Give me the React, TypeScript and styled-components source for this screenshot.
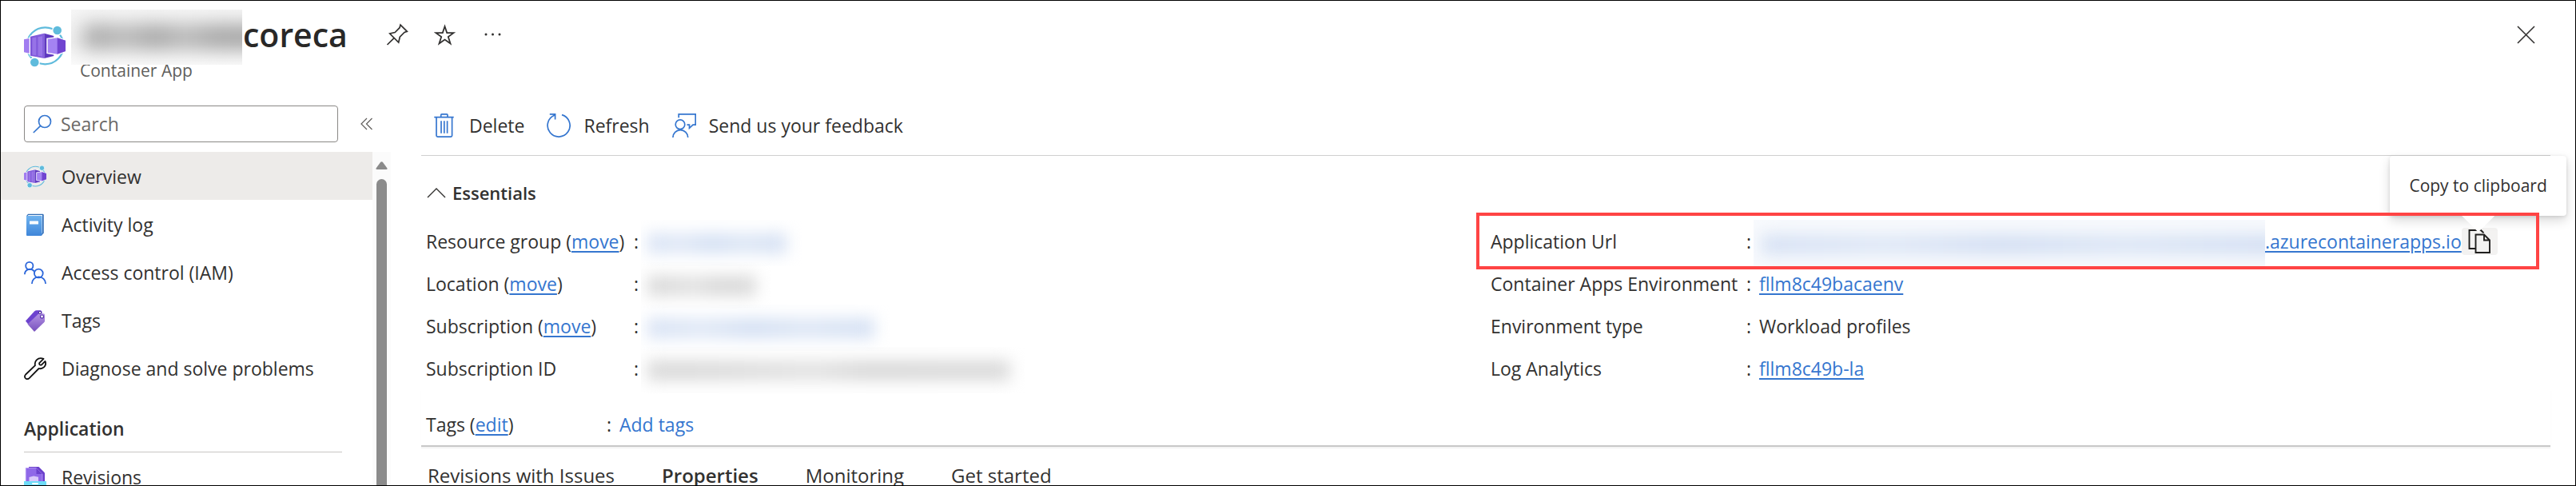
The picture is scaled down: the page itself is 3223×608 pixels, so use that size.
import React from "react";
import styled, { createGlobalStyle, css } from "styled-components";

const ink = "#323130";
const link = "#3576cf";

const GlobalStyle = createGlobalStyle`
  *, *::before, *::after { box-sizing: border-box; }
  body {
    margin: 0;
    background: #fff;
    color: ${ink};
    font-family: "Open Sans", "Noto Sans", sans-serif;
    font-size: 23px;
    line-height: 32px;
  }
  h1, h2, p, ul, dl, dd, dt { margin: 0; padding: 0; }
  ul { list-style: none; }
  svg { display: block; flex: none; }
`;

const buttonReset = css`
  border: 0;
  padding: 0;
  background: none;
  color: inherit;
  font: inherit;
  cursor: pointer;
`;

const Frame = styled.div`
  display: flex;
  flex-direction: column;
  height: 100vh;
  overflow: hidden;
  border: 1px solid #000;
`;

/* ---------- blade header ---------- */

const Header = styled.header`
  display: flex;
  align-items: flex-start;
  flex: none;
  gap: 7px;
  padding: 11px 50px 30px 29px;
`;

const LogoSlot = styled.div`
  padding-top: 20px;
`;

const Heading = styled.div`
  flex: 1;
`;

const TitleRow = styled.div`
  display: flex;
  align-items: flex-start;
  height: 62px;
`;

const Title = styled.h1`
  display: flex;
  align-items: flex-start;
  font-size: 41px;
  font-weight: 600;
  line-height: 62px;
  color: #292827;
`;

const TitleMask = styled.span`
  position: relative;
  z-index: 1;
  width: 214px;
  height: 69px;
  margin-right: 1px;
  overflow: hidden;
  background: linear-gradient(#f6f6f6, #f0f0f0 60%, #fafafa);

  &::before {
    content: "";
    position: absolute;
    inset: 19px -30px 20px 16px;
    background: linear-gradient(90deg, #a0a0a0, #b8b8b8 22%, #a2a2a2 40%, #b8b8b8 55%, #a4a4a4 72%, #a2a2a2);
    filter: blur(12px);
  }
`;

const Subtitle = styled.p`
  padding-left: 11px;
  font-size: 21px;
  line-height: 28px;
  color: #605e5c;
`;

const TitleActions = styled.div`
  display: flex;
  gap: 32px;
  margin-left: 48px;
`;

const IconButton = styled.button`
  ${buttonReset}
  display: flex;
  align-items: center;
  height: 62px;
`;

/* ---------- side menu ---------- */

const Body = styled.div`
  display: flex;
  flex: 1;
  min-height: 0;
`;

const Sidebar = styled.aside`
  display: flex;
  flex-direction: column;
  flex: none;
  width: 488px;
  gap: 12px;
`;

const SearchRow = styled.div`
  display: flex;
  align-items: center;
  gap: 28px;
  padding-left: 29px;
`;

const SearchBox = styled.label`
  display: flex;
  align-items: center;
  gap: 11px;
  width: 393px;
  height: 46px;
  padding: 0 10px;
  border: 1px solid #8a8886;
  border-radius: 4px;
`;

const SearchInput = styled.input`
  flex: 1;
  min-width: 0;
  height: 32px;
  padding: 0;
  border: 0;
  outline: 0;
  background: none;
  color: ${ink};
  font: inherit;
  &::placeholder { color: #6b6967; opacity: 1; }
`;

const CollapseButton = styled.button`
  ${buttonReset}
`;

const MenuArea = styled.div`
  display: flex;
  flex: 1;
  min-height: 0;
`;

const Menu = styled.nav`
  flex: 1;
  overflow: hidden;
`;

const MenuLink = styled.a<{ $active?: boolean }>`
  display: flex;
  align-items: center;
  gap: 19px;
  height: 60px;
  padding: 2px 0 0 29px;
  background: ${(p) => (p.$active ? "#edebe9" : "transparent")};
  color: inherit;
  text-decoration: none;
`;

const MenuSection = styled.h2`
  margin: 30px 38px 0 29px;
  padding-bottom: 13px;
  border-bottom: 1px solid #c8c6c4;
  font-size: 23px;
  font-weight: 600;
`;

const ScrollTrack = styled.div`
  display: flex;
  flex-direction: column;
  align-items: center;
  flex: none;
  width: 23px;
  padding-top: 12px;
  gap: 12px;
  background: #fbfbfb;
`;

const ScrollThumb = styled.div`
  flex: 1;
  width: 13px;
  border-radius: 7px 7px 0 0;
  background: #8b8b8b;
`;

/* ---------- main ---------- */

const Main = styled.main`
  flex: 1;
  min-width: 0;
  padding: 0 31px 0 38px;
`;

const Toolbar = styled.div`
  display: flex;
  align-items: center;
  gap: 28px;
  padding: 0 0 12px 14px;
  border-bottom: 1px solid #d0d0d0;
`;

const Command = styled.button`
  ${buttonReset}
  display: flex;
  align-items: center;
  gap: 16px;
  height: 50px;
`;

const EssentialsToggle = styled.button`
  ${buttonReset}
  display: flex;
  align-items: center;
  gap: 8px;
  margin: 30px 0 18px 7px;
  font-size: 22px;
  font-weight: 600;
  line-height: 32px;
`;

const Columns = styled.div`
  display: grid;
  grid-template-columns: 1fr 1fr;
`;

const Field = styled.dl<{ $label: number; $marked?: boolean }>`
  position: relative;
  display: grid;
  grid-template-columns: ${(p) => p.$label}px 1fr;
  align-items: center;
  height: 53px;
  padding-left: 6px;
  white-space: nowrap;

  ${(p) =>
    p.$marked &&
    css`
      &::after {
        content: "";
        position: absolute;
        z-index: 3;
        inset: -9px 14px -9px -12px;
        border: 4px solid #ff4444;
        pointer-events: none;
      }
    `}
`;

const Value = styled.dd`
  display: flex;
  align-items: center;
  &::before {
    content: ":";
    width: 9px;
  }
`;

const ValueText = styled.span`
  padding-left: 7px;
`;

const TextLink = styled.a<{ $plain?: boolean }>`
  color: ${link};
  text-decoration: ${(p) => (p.$plain ? "none" : "underline")};
  text-decoration-thickness: 2px;
  text-underline-offset: 3px;
`;

const Mask = styled.span<{ $width: number; $tone: "blue" | "grey"; $boxed?: boolean }>`
  position: relative;
  flex: none;
  width: ${(p) => p.$width}px;
  height: 58px;
  margin: -2px 0 -7px;
  overflow: hidden;
  background: ${(p) => (p.$boxed ? "#f8fafd" : "none")};

  &::before {
    content: "";
    position: absolute;
    inset: ${(p) => (p.$boxed ? "18px -20px 14px 10px" : "17px 22px 16px 8px")};
    background: ${(p) =>
      p.$tone === "blue"
        ? "linear-gradient(90deg, #d6e1f4, #dfe8f6 24%, #d3dff3 46%, #dce6f5 70%, #d3dff3)"
        : "linear-gradient(90deg, #d8d8d8, #dadada 18%, #e2e2e2 46%, #d8d8d8 60%, #d9d9d9)"};
    filter: blur(10px);
  }
`;

const CopySlot = styled.span`
  position: relative;
`;

const CopyButton = styled.button`
  ${buttonReset}
  display: flex;
  align-items: center;
  justify-content: center;
  width: 45px;
  height: 34px;
  border-radius: 4px;
  background: #f3f2f1;
`;

const Tooltip = styled.span`
  position: absolute;
  z-index: 2;
  right: -86px;
  bottom: 49px;
  padding: 0 24px;
  border-radius: 4px;
  background: #fff;
  box-shadow: 0 6px 14px rgba(0, 0, 0, 0.15), 0 1px 4px rgba(0, 0, 0, 0.12);
  font-size: 21px;
  line-height: 75px;
`;

const TooltipBeak = styled.span`
  position: absolute;
  z-index: 2;
  left: 0;
  bottom: 28px;
  width: 42px;
  height: 21px;
  background: #fff;
  clip-path: polygon(0 0, 100% 0, 50% 100%);
`;

const TagsArea = styled.div`
  padding: 17px 0 0;
  border-bottom: 2px solid #c8c8c8;
  box-shadow: 0 2px 1px #f4f4f4;
`;

const Tabs = styled.div`
  display: flex;
  gap: 59px;
  padding: 18px 0 0 8px;
`;

const Tab = styled.button<{ $active?: boolean }>`
  ${buttonReset}
  font-size: 24px;
  font-weight: ${(p) => (p.$active ? 600 : 400)};
  line-height: 36px;
`;

/* ---------- icons ---------- */

const ContainerAppIcon = ({ size }: { size: number }) => (
  <svg width={size} height={size} viewBox="0 0 52 52" aria-hidden="true">
    <defs>
      <linearGradient id="caFace" x1="0" y1="0" x2="1" y2="0">
        <stop offset="0" stopColor="#7b52d8" />
        <stop offset="1" stopColor="#8661de" />
      </linearGradient>
    </defs>
    <circle cx="26.5" cy="25.3" r="23" fill="none" stroke="#5fbbdc" strokeWidth="2.2" />
    <path d="M-1 16.5 7.5 15v21L-1 34.5Z" fill="#fff" />
    <path d="M0 17.3 6.7 16v18.7L0 33.3Z" fill="#a17df0" />
    <path d="M7.3 12.8 25.3 8.7 38 12v27l-12.700 3L7.300 38.5Z" fill="#fff" />
    <path d="M8 13.7 25.3 9.7v31.3L8 37.7Z" fill="url(#caFace)" />
    <path d="M25.3 9.7 37.3 13v25l-12 3Z" fill="#5f38c0" />
    <path d="M10.3 15.5l5-.9v22.8l-5-.9ZM17.5 14.3l5.500-1v25.4l-5.500-1Z" fill="#9d7aea" opacity=".8" />
    <path d="M29 16.4 41.7 14.6 52.5 18.3v14.2L41.7 36.5 29 34.5Z" fill="#a483f2" stroke="#fff" strokeWidth="1.4" />
    <path d="M41.7 15.3 52 18.7v13.4L41.7 35.8Z" fill="#7044d0" />
    <circle cx="41.7" cy="6" r="6" fill="#5fbbdc" stroke="#fff" strokeWidth="1.4" />
    <circle cx="13.3" cy="46" r="6" fill="#5fbbdc" stroke="#fff" strokeWidth="1.4" />
  </svg>
);

const PinIcon = () => (
  <svg width="28" height="28" viewBox="0 0 28 28" fill="none" stroke={ink} strokeWidth="1.7" aria-hidden="true">
    <path d="M18 2.2 26.3 10.3 23 11.5 17.3 17.2 15.7 24 4.7 13 11.2 11.5 17 5.7ZM10.3 18.3 1.5 27" />
  </svg>
);

const StarIcon = () => (
  <svg width="28" height="28" viewBox="0 0 28 28" fill="none" stroke={ink} strokeWidth="1.8" aria-hidden="true">
    <path d="M13.5 4 16.2 12 24.5 12.2 17.8 17 20.5 25.5 13.5 20.5 6.5 25.5 9.2 17 2.500 12.2 10.8 12Z" />
  </svg>
);

const MoreIcon = () => (
  <svg width="28" height="28" viewBox="0 0 28 28" fill={ink} aria-hidden="true">
    <circle cx="5" cy="14" r="1.5" />
    <circle cx="13.5" cy="14" r="1.5" />
    <circle cx="22" cy="14" r="1.5" />
  </svg>
);

const CloseIcon = () => (
  <svg width="23" height="23" viewBox="0 0 23 23" fill="none" stroke={ink} strokeWidth="1.6" aria-hidden="true">
    <path d="M1 1 22 22M22 1 1 22" />
  </svg>
);

const SearchIcon = () => (
  <svg width="24" height="24" viewBox="0 0 24 24" fill="none" stroke={link} strokeWidth="1.7" aria-hidden="true">
    <circle cx="15" cy="9" r="7.5" />
    <path d="M9.7 14.3.8 23" />
  </svg>
);

const CollapseIcon = () => (
  <svg width="16" height="16" viewBox="0 0 16 16" fill="none" stroke="#605e5c" strokeWidth="1.2" aria-hidden="true">
    <path d="M8 1 1 8l7 7M14.5 1l-7 7 7 7" />
  </svg>
);

const BookIcon = () => (
  <svg width="28" height="28" viewBox="0 0 28 28" aria-hidden="true">
    <defs>
      <linearGradient id="bookCover" x1="0" y1="0" x2="0" y2="1">
        <stop offset="0" stopColor="#6fb3ef" />
        <stop offset="1" stopColor="#3f86d9" />
      </linearGradient>
    </defs>
    <path d="M5 .8h18.5q1.200 0 1.200 1.200v22.5l-2.200 2.500H6L3.200 3Z" fill="#2f6cb5" />
    <path d="M5.5 2H23v22l-1 1.500V3H4.500Z" fill="#f2f7fd" />
    <rect x="3" y="3" width="19.5" height="25" rx="1" fill="url(#bookCover)" />
    <rect x="7" y="9.5" width="11" height="4" rx=".6" fill="#fff" />
  </svg>
);

const PeopleIcon = () => (
  <svg width="28" height="28" viewBox="0 0 28 28" fill="none" stroke="#2b66da" strokeWidth="1.8" aria-hidden="true">
    <circle cx="6.8" cy="5.5" r="4.6" />
    <circle cx="18.3" cy="15" r="5.4" />
    <path d="M.9 16.3a6.500 6.500 0 0 1 11.800-3.700M9.900 28a8.600 8.600 0 0 1 17.200 0" />
  </svg>
);

const TagIcon = () => (
  <svg width="28" height="28" viewBox="0 0 28 28" aria-hidden="true">
    <defs>
      <linearGradient id="tagFace" x1="0" y1="0" x2="0" y2="1">
        <stop offset="0" stopColor="#b494e4" />
        <stop offset="1" stopColor="#7750bd" />
      </linearGradient>
    </defs>
    <path d="M2 14.5 13 2.5q1.200-1.200 3-1.200h5l1.500 1.500v6L8 22Z" fill="#6d43cf" />
    <path d="M4.500 18.5 17.500 6.200q1-.9 2.500-.9h4.500q1.500 0 1.500 1.500v7.700q0 1-.8 1.800L13 28Z" fill="url(#tagFace)" />
    <circle cx="20" cy="4" r="1.6" fill="#fff" stroke="#4a2a98" strokeWidth="1" />
    <circle cx="22.5" cy="9" r="2" fill="#fff" stroke="#5a35ac" strokeWidth="1.2" />
  </svg>
);

const WrenchIcon = () => (
  <svg width="28" height="28" viewBox="0 0 28 28" fill="none" stroke="#111" strokeWidth="1.8" strokeLinejoin="round" aria-hidden="true">
    <path d="M24.500 1.900 19.200 7.200q-.3 1.500.6 2.100t2 .3l4.700-4.700Q28.300 9 25.200 12.200q-3 2.800-6.600 1.800L6.600 26.200q-1.800 1.600-3.800.8Q.9 26.100.9 24q.1-1.300 1.200-2.500L14 10.200q-1-4 1.700-6.900Q19.500-.2 24.500 1.900Z" />
  </svg>
);

const RevisionsIcon = () => (
  <svg width="28" height="28" viewBox="0 0 28 28" aria-hidden="true">
    <path d="M6 1h12.500L26 8.500V22H6Z" fill="#6b40cc" />
    <path d="M2.300 2.500h13.200l7.500 7.500v12H2.300Z" fill="#8f68e8" stroke="#b99cf5" strokeWidth=".8" />
    <path d="M15.500 2.500v7.500H23Z" fill="#6b40cc" />
    <path d="M6.500 14 12 12.500l6 1.300V20H6.500Z" fill="#d9c8fa" />
    <path d="M0 19h28v9H0Z" fill="#6fdcf8" />
    <rect x="10" y="21" width="8" height="2" rx="1" fill="#fff" />
  </svg>
);

const TrashIcon = () => (
  <svg width="30" height="30" viewBox="0 0 30 30" fill="none" stroke={link} strokeWidth="1.7" aria-hidden="true">
    <path d="M2.300 4.700H26.700M10.700 4.700V2q0-1.100 1.100-1.100h6.100Q19 .9 19 2v2.700M5 4.700V27.500q0 1.600 1.600 1.600H23q1.600 0 1.600-1.600V4.700M11 9.300V24.700M14.800 9.300V24.700M18.600 9.300V24.700" />
  </svg>
);

const RefreshIcon = () => (
  <svg width="30" height="30" viewBox="0 0 30 30" fill="none" stroke={link} strokeWidth="1.7" aria-hidden="true">
    <path d="M19 1.600A14 14 0 1 1 10 2M3.800.9H10.600V7.400" />
  </svg>
);

const FeedbackIcon = () => (
  <svg width="30" height="30" viewBox="0 0 30 30" fill="none" stroke={link} strokeWidth="1.7" aria-hidden="true">
    <circle cx="10" cy="13.7" r="5.8" />
    <path d="M.9 30a9.400 9.400 0 0 1 18.800 0M8.200 5.300V.9H29.200V14.200H26L21.500 18.300V14.200H18.500" />
  </svg>
);

const ChevronUpIcon = () => (
  <svg width="24" height="14" viewBox="0 0 24 14" fill="none" stroke={ink} strokeWidth="1.4" aria-hidden="true">
    <path d="M1 13 12 2 23 13" />
  </svg>
);

const CopyIcon = () => (
  <svg width="28" height="30" viewBox="0 0 28 30" fill="none" stroke="#201f1e" strokeWidth="1.9" aria-hidden="true">
    <path d="M19 4.500V4L16 1H1.500V24H9M9.500 6.500H20L27 13.500V29H9.500ZM20 6.500V13.500H27" />
  </svg>
);

const ScrollUpIcon = () => (
  <svg width="15" height="10" viewBox="0 0 15 10" fill="#8b8b8b" aria-hidden="true">
    <path d="M6.200.8q1.300-1.300 2.600 0L14.500 8.500q.3 1.500-1 1.500h-12q-1.300 0-1-1.500Z" />
  </svg>
);

/* ---------- page ---------- */

const menu = [
  { label: "Overview", icon: <ContainerAppIcon size={28} />, active: true },
  { label: "Activity log", icon: <BookIcon /> },
  { label: "Access control (IAM)", icon: <PeopleIcon /> },
  { label: "Tags", icon: <TagIcon /> },
  { label: "Diagnose and solve problems", icon: <WrenchIcon /> },
];

const commands = [
  { label: "Delete", icon: <TrashIcon /> },
  { label: "Refresh", icon: <RefreshIcon /> },
  { label: "Send us your feedback", icon: <FeedbackIcon /> },
];

const resource: { label: string; action?: string; width: number; tone: "blue" | "grey" }[] = [
  { label: "Resource group", action: "move", width: 204, tone: "blue" },
  { label: "Location", action: "move", width: 166, tone: "grey" },
  { label: "Subscription", action: "move", width: 314, tone: "blue" },
  { label: "Subscription ID", width: 484, tone: "grey" },
];

const tabs = ["Revisions with Issues", "Properties", "Monitoring", "Get started"];

export default function App() {
  return (
    <Frame>
      <GlobalStyle />
      <Header>
        <LogoSlot>
          <ContainerAppIcon size={52} />
        </LogoSlot>
        <Heading>
          <TitleRow>
            <Title>
              <TitleMask />
              coreca
            </Title>
            <TitleActions>
              <IconButton aria-label="Pin"><PinIcon /></IconButton>
              <IconButton aria-label="Favorite"><StarIcon /></IconButton>
              <IconButton aria-label="More"><MoreIcon /></IconButton>
            </TitleActions>
          </TitleRow>
          <Subtitle>Container App</Subtitle>
        </Heading>
        <IconButton aria-label="Close"><CloseIcon /></IconButton>
      </Header>

      <Body>
        <Sidebar>
          <SearchRow>
            <SearchBox>
              <SearchIcon />
              <SearchInput type="text" placeholder="Search" aria-label="Search" />
            </SearchBox>
            <CollapseButton aria-label="Collapse menu"><CollapseIcon /></CollapseButton>
          </SearchRow>
          <MenuArea>
            <Menu>
              <ul>
                {menu.map((m) => (
                  <li key={m.label}>
                    <MenuLink href="#" $active={m.active}>{m.icon}{m.label}</MenuLink>
                  </li>
                ))}
              </ul>
              <MenuSection>Application</MenuSection>
              <MenuLink href="#"><RevisionsIcon />Revisions</MenuLink>
            </Menu>
            <ScrollTrack>
              <ScrollUpIcon />
              <ScrollThumb />
            </ScrollTrack>
          </MenuArea>
        </Sidebar>

        <Main>
          <Toolbar>
            {commands.map((c) => (
              <Command key={c.label}>{c.icon}{c.label}</Command>
            ))}
          </Toolbar>

          <EssentialsToggle aria-expanded="true"><ChevronUpIcon />Essentials</EssentialsToggle>

          <Columns>
            <div>
              {resource.map((r) => (
                <Field key={r.label} $label={260}>
                  <dt>
                    {r.label}
                    {r.action && <> (<TextLink href="#">{r.action}</TextLink>)</>}
                  </dt>
                  <Value><Mask $width={r.width} $tone={r.tone} /></Value>
                </Field>
              ))}
            </div>
            <div>
              <Field $label={320} $marked>
                <dt>Application Url</dt>
                <Value>
                  <Mask $width={640} $tone="blue" $boxed />
                  <TextLink href="#">.azurecontainerapps.io</TextLink>
                  <CopySlot>
                    <CopyButton aria-label="Copy to clipboard"><CopyIcon /></CopyButton>
                    <Tooltip role="tooltip">Copy to clipboard</Tooltip>
                    <TooltipBeak />
                  </CopySlot>
                </Value>
              </Field>
              <Field $label={320}>
                <dt>Container Apps Environment</dt>
                <Value><ValueText><TextLink href="#">fllm8c49bacaenv</TextLink></ValueText></Value>
              </Field>
              <Field $label={320}>
                <dt>Environment type</dt>
                <Value><ValueText>Workload profiles</ValueText></Value>
              </Field>
              <Field $label={320}>
                <dt>Log Analytics</dt>
                <Value><ValueText><TextLink href="#">fllm8c49b-la</TextLink></ValueText></Value>
              </Field>
            </div>
          </Columns>

          <TagsArea>
            <Field $label={226}>
              <dt>Tags (<TextLink href="#">edit</TextLink>)</dt>
              <Value><ValueText><TextLink href="#" $plain>Add tags</TextLink></ValueText></Value>
            </Field>
          </TagsArea>

          <Tabs role="tablist">
            {tabs.map((t) => (
              <Tab key={t} role="tab" $active={t === "Properties"} aria-selected={t === "Properties"}>{t}</Tab>
            ))}
          </Tabs>
        </Main>
      </Body>
    </Frame>
  );
}
